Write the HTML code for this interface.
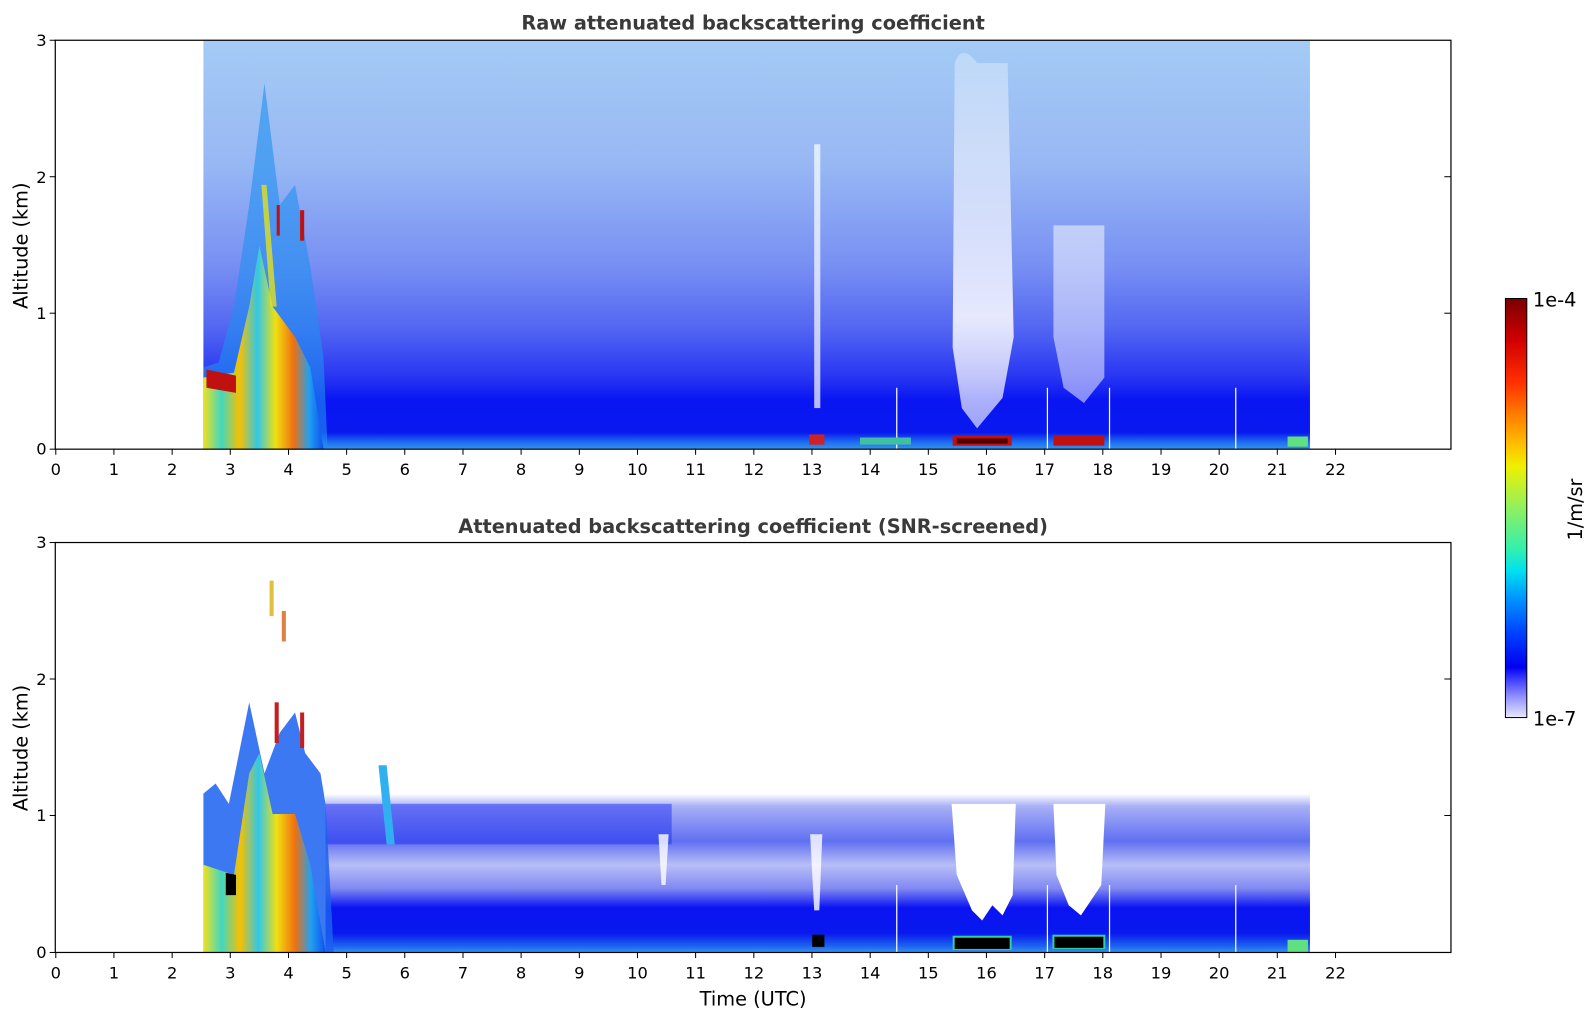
<!DOCTYPE html>
<html><head><meta charset="utf-8"><style>
html,body{margin:0;padding:0;background:#fff;overflow:hidden;width:1595px;height:1020px}
svg{display:block}
text{font-family:"DejaVu Sans","Liberation Sans",sans-serif;fill:#000}
</style></head><body>
<svg width="1595" height="1020" viewBox="0 0 1595 1020" xmlns="http://www.w3.org/2000/svg">
<defs>
<linearGradient id="topg" x1="0" y1="37" x2="0" y2="440" gradientUnits="userSpaceOnUse">
<stop offset="0" stop-color="#a4cbf5"/>
<stop offset="0.3" stop-color="#98b8f4"/>
<stop offset="0.55" stop-color="#7890f3"/>
<stop offset="0.7" stop-color="#5468f2"/>
<stop offset="0.82" stop-color="#2a38f2"/>
<stop offset="0.88" stop-color="#0a16f2"/>
<stop offset="0.96" stop-color="#0818ee"/>
<stop offset="0.985" stop-color="#2070f0"/>
<stop offset="1" stop-color="#3090f0"/>
</linearGradient>
<linearGradient id="botg" x1="0" y1="780" x2="0" y2="936" gradientUnits="userSpaceOnUse">
<stop offset="0" stop-color="#ffffff"/>
<stop offset="0.08" stop-color="#a8b0f6"/>
<stop offset="0.3" stop-color="#6070f2"/>
<stop offset="0.45" stop-color="#b8bef6"/>
<stop offset="0.6" stop-color="#8088f2"/>
<stop offset="0.72" stop-color="#0a14f2"/>
<stop offset="0.88" stop-color="#0818ee"/>
<stop offset="0.96" stop-color="#1c60f0"/>
<stop offset="1" stop-color="#3090f0"/>
</linearGradient>
<linearGradient id="jet" x1="0" y1="0" x2="1" y2="0">
<stop offset="0" stop-color="#f0e020"/>
<stop offset="0.15" stop-color="#40d8c0"/>
<stop offset="0.3" stop-color="#f8c000"/>
<stop offset="0.45" stop-color="#30c8e8"/>
<stop offset="0.6" stop-color="#f0e010"/>
<stop offset="0.75" stop-color="#f07010"/>
<stop offset="0.88" stop-color="#20a0f0"/>
<stop offset="1" stop-color="#1050f0"/>
</linearGradient>
<linearGradient id="cb" x1="0" y1="0" x2="0" y2="1">
<stop offset="0" stop-color="#7a0000"/>
<stop offset="0.1" stop-color="#d00000"/>
<stop offset="0.2" stop-color="#ff3000"/>
<stop offset="0.28" stop-color="#ff8000"/>
<stop offset="0.35" stop-color="#ffc000"/>
<stop offset="0.4" stop-color="#f0f000"/>
<stop offset="0.5" stop-color="#90f060"/>
<stop offset="0.6" stop-color="#30f0b0"/>
<stop offset="0.65" stop-color="#00e0f0"/>
<stop offset="0.72" stop-color="#0090ff"/>
<stop offset="0.8" stop-color="#0040ff"/>
<stop offset="0.88" stop-color="#0000f0"/>
<stop offset="0.91" stop-color="#4040ff"/>
<stop offset="0.95" stop-color="#9090ff"/>
<stop offset="1" stop-color="#e8e8ff"/>
</linearGradient>
<linearGradient id="wfade" x1="0" y1="0" x2="0" y2="1">
<stop offset="0" stop-color="#fff" stop-opacity="0.3"/>
<stop offset="0.7" stop-color="#fff" stop-opacity="0.85"/>
<stop offset="1" stop-color="#fff" stop-opacity="0.6"/>
</linearGradient>
</defs>
<g transform="translate(-0.2,2.2) scale(1.018,1.0147)">
<text x="740" y="27" font-size="19" font-weight="bold" text-anchor="middle" style="fill:#3a3a3a">Raw attenuated backscattering coefficient</text>
<text x="740" y="523" font-size="19" font-weight="bold" text-anchor="middle" style="fill:#3a3a3a">Attenuated backscattering coefficient (SNR-screened)</text>

<rect x="200" y="37" width="1087" height="403" fill="url(#topg)"/>
<path d="M938 60 Q945 40 960 60 L990 60 L996 330 L985 390 L960 420 L945 400 L936 340 Z" fill="url(#wfade)"/>
<path d="M1035 220 L1085 220 L1085 370 L1065 395 L1045 380 L1035 330 Z" fill="#fff" opacity="0.5"/>
<rect x="800" y="140" width="6" height="260" fill="#fff" opacity="0.7"/>
<rect x="880.5" y="380" width="1.2" height="60" fill="#fff"/>
<rect x="1028.5" y="380" width="1.2" height="60" fill="#fff"/>
<rect x="1089.5" y="380" width="1.2" height="60" fill="#fff"/>
<rect x="1213.5" y="380" width="1.2" height="60" fill="#fff"/>
<path d="M200 360 L215 355 L230 300 L245 200 L260 80 L275 200 L290 180 L305 260 L318 350 L322 440 L200 440 Z" fill="#2090f0" opacity="0.6"/>
<path d="M200 370 L230 365 L245 300 L255 240 L268 300 L290 330 L305 360 L318 440 L200 440 Z" fill="url(#jet)"/>
<path d="M203 362 L232 368 L232 385 L203 380 Z" fill="#c01010"/>
<path d="M257 180 L262 180 L272 300 L266 300 Z" fill="#e0e020" opacity="0.8"/>
<rect x="295" y="205" width="4" height="30" fill="#c01010"/>
<rect x="272" y="200" width="3" height="30" fill="#c01010"/>
<rect x="936" y="427" width="58" height="10" fill="#c01010"/>
<rect x="940" y="430" width="50" height="5" fill="#500000"/>
<rect x="1035" y="427" width="50" height="10" fill="#c01010"/>
<rect x="795" y="426" width="15" height="10" fill="#d02020"/>
<rect x="845" y="429" width="50" height="7" fill="#40c0a0"/>
<rect x="1265" y="428" width="20" height="10" fill="#60e080"/>

<rect x="320" y="780" width="967" height="156" fill="url(#botg)"/>
<rect x="320" y="790" width="340" height="40" fill="#2030f0" opacity="0.5"/>
<path d="M935 790 L940 860 L955 895 L965 905 L975 890 L985 900 L995 880 L998 790 Z" fill="#fff"/>
<path d="M1035 790 L1038 860 L1050 890 L1062 900 L1072 885 L1082 870 L1086 790 Z" fill="#fff"/>
<path d="M796 820 L808 820 L805 895 L800 895 Z" fill="#fff" opacity="0.8"/>
<path d="M647 820 L657 820 L654 870 L650 870 Z" fill="#fff" opacity="0.8"/>
<rect x="880.5" y="870" width="1.2" height="66" fill="#fff"/>
<rect x="1028.5" y="870" width="1.2" height="66" fill="#fff"/>
<rect x="1089.5" y="870" width="1.2" height="66" fill="#fff"/>
<rect x="1213.5" y="870" width="1.2" height="66" fill="#fff"/>
<path d="M200 780 L212 770 L225 790 L235 740 L245 690 L260 760 L275 720 L290 700 L300 740 L315 760 L320 790 L328 936 L200 936 Z" fill="#1a60f0" opacity="0.85"/>
<path d="M200 850 L230 860 L245 760 L255 740 L268 800 L290 800 L305 850 L320 936 L200 936 Z" fill="url(#jet)"/>
<path d="M222 858 L232 860 L232 880 L222 880 Z" fill="#000"/>
<path d="M372 752 L380 752 L388 830 L380 830 Z" fill="#30b0f0"/>
<rect x="265" y="570" width="4" height="35" fill="#e0c040"/>
<rect x="277" y="600" width="4" height="30" fill="#e08040"/>
<rect x="270" y="690" width="4" height="40" fill="#c02020"/>
<rect x="295" y="700" width="4" height="35" fill="#c02020"/>
<rect x="936" y="920" width="58" height="14" fill="#30d0a0"/>
<rect x="938" y="922" width="54" height="11" fill="#000"/>
<rect x="1034" y="919" width="52" height="14" fill="#30d0a0"/>
<rect x="1036" y="921" width="48" height="11" fill="#000"/>
<rect x="798" y="919" width="12" height="12" fill="#000"/>
<rect x="1265" y="924" width="20" height="12" fill="#60e080"/>

<rect x="54.5" y="37.5" width="1371" height="403" fill="none" stroke="#000" stroke-width="1.2"/>
<rect x="54.5" y="532.5" width="1371" height="404" fill="none" stroke="#000" stroke-width="1.2"/>

<g stroke="#000" stroke-width="1">
<line x1="49" y1="37.5" x2="55" y2="37.5"/><line x1="49" y1="172" x2="55" y2="172"/><line x1="49" y1="306.5" x2="55" y2="306.5"/><line x1="49" y1="440.5" x2="55" y2="440.5"/>
<line x1="1419" y1="172" x2="1425" y2="172"/><line x1="1419" y1="306.5" x2="1425" y2="306.5"/>
<line x1="49" y1="532.5" x2="55" y2="532.5"/><line x1="49" y1="667" x2="55" y2="667"/><line x1="49" y1="801.5" x2="55" y2="801.5"/><line x1="49" y1="936.5" x2="55" y2="936.5"/>
<line x1="1419" y1="667" x2="1425" y2="667"/><line x1="1419" y1="801.5" x2="1425" y2="801.5"/>
</g>
<g font-size="16" text-anchor="end">
<text x="46" y="43">3</text><text x="46" y="178">2</text><text x="46" y="312">1</text><text x="46" y="446">0</text>
<text x="46" y="538">3</text><text x="46" y="673">2</text><text x="46" y="807">1</text><text x="46" y="942">0</text>
</g>

<g stroke="#000" stroke-width="1" id="xt">
<line x1="55" y1="440" x2="55" y2="446"/><line x1="112.1" y1="440" x2="112.1" y2="446"/><line x1="169.3" y1="440" x2="169.3" y2="446"/><line x1="226.4" y1="440" x2="226.4" y2="446"/><line x1="283.6" y1="440" x2="283.6" y2="446"/><line x1="340.7" y1="440" x2="340.7" y2="446"/><line x1="397.8" y1="440" x2="397.8" y2="446"/><line x1="455" y1="440" x2="455" y2="446"/><line x1="512.1" y1="440" x2="512.1" y2="446"/><line x1="569.3" y1="440" x2="569.3" y2="446"/><line x1="626.4" y1="440" x2="626.4" y2="446"/><line x1="683.5" y1="440" x2="683.5" y2="446"/><line x1="740.7" y1="440" x2="740.7" y2="446"/><line x1="797.8" y1="440" x2="797.8" y2="446"/><line x1="855" y1="440" x2="855" y2="446"/><line x1="912.1" y1="440" x2="912.1" y2="446"/><line x1="969.2" y1="440" x2="969.2" y2="446"/><line x1="1026.4" y1="440" x2="1026.4" y2="446"/><line x1="1083.5" y1="440" x2="1083.5" y2="446"/><line x1="1140.7" y1="440" x2="1140.7" y2="446"/><line x1="1197.8" y1="440" x2="1197.8" y2="446"/><line x1="1254.9" y1="440" x2="1254.9" y2="446"/><line x1="1312.1" y1="440" x2="1312.1" y2="446"/>
</g>
<use href="#xt" transform="translate(0,496)"/>
<g font-size="16" text-anchor="middle">
<text x="55" y="466">0</text><text x="112.1" y="466">1</text><text x="169.3" y="466">2</text><text x="226.4" y="466">3</text><text x="283.6" y="466">4</text><text x="340.7" y="466">5</text><text x="397.8" y="466">6</text><text x="455" y="466">7</text><text x="512.1" y="466">8</text><text x="569.3" y="466">9</text><text x="626.4" y="466">10</text><text x="683.5" y="466">11</text><text x="740.7" y="466">12</text><text x="797.8" y="466">13</text><text x="855" y="466">14</text><text x="912.1" y="466">15</text><text x="969.2" y="466">16</text><text x="1026.4" y="466">17</text><text x="1083.5" y="466">18</text><text x="1140.7" y="466">19</text><text x="1197.8" y="466">20</text><text x="1254.9" y="466">21</text><text x="1312.1" y="466">22</text>
</g>
<g font-size="16" text-anchor="middle">
<text x="55" y="962">0</text><text x="112.1" y="962">1</text><text x="169.3" y="962">2</text><text x="226.4" y="962">3</text><text x="283.6" y="962">4</text><text x="340.7" y="962">5</text><text x="397.8" y="962">6</text><text x="455" y="962">7</text><text x="512.1" y="962">8</text><text x="569.3" y="962">9</text><text x="626.4" y="962">10</text><text x="683.5" y="962">11</text><text x="740.7" y="962">12</text><text x="797.8" y="962">13</text><text x="855" y="962">14</text><text x="912.1" y="962">15</text><text x="969.2" y="962">16</text><text x="1026.4" y="962">17</text><text x="1083.5" y="962">18</text><text x="1140.7" y="962">19</text><text x="1197.8" y="962">20</text><text x="1254.9" y="962">21</text><text x="1312.1" y="962">22</text>
</g>

<text font-size="19" text-anchor="middle" transform="translate(27,240) rotate(-90)">Altitude (km)</text>
<text font-size="19" text-anchor="middle" transform="translate(27,735) rotate(-90)">Altitude (km)</text>
<text x="740" y="989" font-size="19" text-anchor="middle">Time (UTC)</text>

<rect x="1479" y="292" width="21" height="413" fill="url(#cb)" stroke="#000" stroke-width="1"/>
<text x="1506" y="300" font-size="19">1e-4</text>
<text x="1506" y="713" font-size="19">1e-7</text>
<text font-size="19" text-anchor="middle" transform="translate(1554,500) rotate(-90)">1/m/sr</text>
</g>
</svg>
</body></html>
